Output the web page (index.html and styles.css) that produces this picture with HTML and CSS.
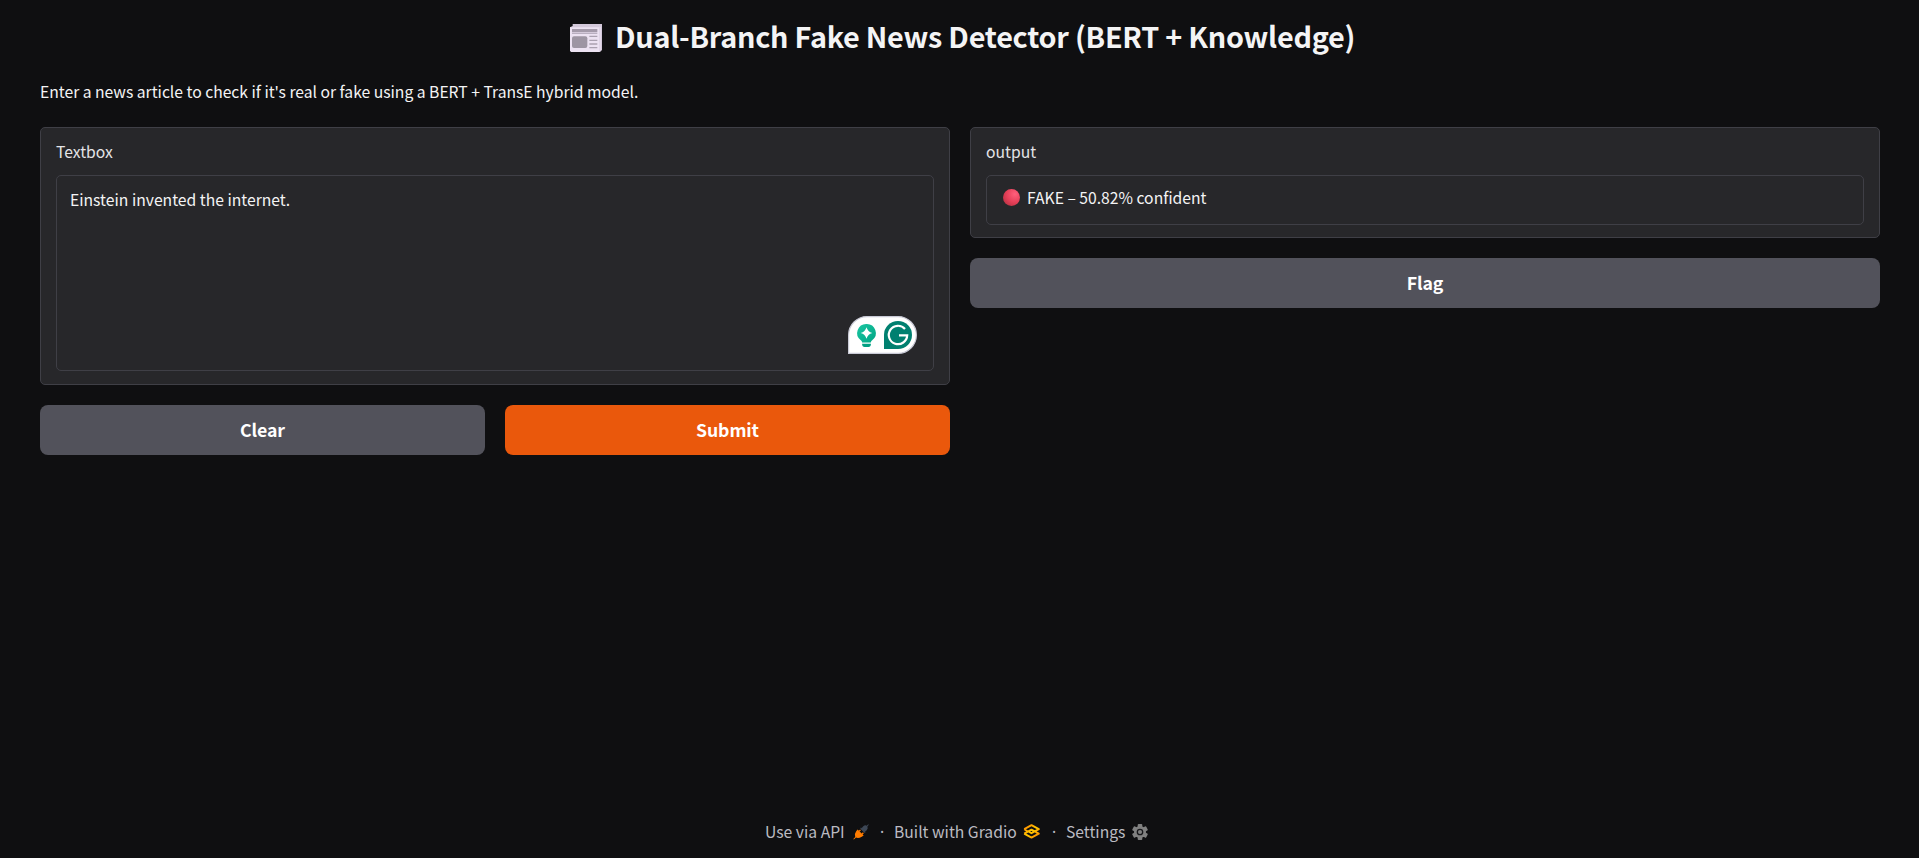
FILE: index.html
```html
<!DOCTYPE html>
<html lang="en">
<head>
<meta charset="utf-8">
<title>Dual-Branch Fake News Detector</title>
<link rel="stylesheet" href="styles.css">
</head>
<body>
<div class="app">
  <h1 class="title">
    <svg class="news" viewBox="0 0 96 84"><path d="M8 0H96V78L90 84H4L0 80V10L8 6Z" fill="#d3c8da"/><path d="M0 10H88V84H4L0 80Z" fill="#ece2f2"/><path d="M88 8H93V78L88 82Z" fill="#e3d8ea"/><path d="M6 15H82V25H6Z" fill="#a49aaa"/><path d="M6 27H82V30H6Z" fill="#b9afc0"/><rect x="6" y="37" width="46" height="35" rx="6" fill="#9d95a3"/><path d="M58 37H82M58 49H82M58 60H82M58 71H82" stroke="#aaa1b0" stroke-width="4"/></svg>
    <span class="title-text">Dual-Branch Fake News Detector (BERT + Knowledge)</span>
  </h1>
  <p class="desc">Enter a news article to check if it's real or fake using a BERT + TransE hybrid model.</p>
  <main class="columns">
    <section class="column">
      <div class="block">
        <div class="label label-in">Textbox</div>
        <div class="field area"><span class="value">Einstein invented the internet.</span>
          <svg class="assistant" width="69" height="38" viewBox="0 0 69 38">
            <defs><linearGradient id="bulb" x1="0" x2="1" y2="1"><stop stop-color="#1bc6a2"/><stop offset="1" stop-color="#00a584"/></linearGradient></defs>
            <path d="M.6 37.4V19A18.4 18.4 0 0 1 19 .6H50A18.4 18.4 0 0 1 50 37.4Z" fill="#fff" stroke="#c9cad6" stroke-width="1.2"/>
            <path d="M18.5 8A9 9 0 0 0 12.8 24.2C13.7 25 14 25.6 14.2 26.4H22.8C23 25.6 23.3 25 24.2 24.2A9 9 0 0 0 18.5 8Z" fill="url(#bulb)"/>
            <path d="M14 27.7H23Q22.7 31 20.5 31H16.5Q14.3 31 14 27.7Z" fill="#009f82"/>
            <path d="M18.5 11.2Q19.8 15.700 24.300 17Q19.800 18.300 18.500 22.800Q17.200 18.300 12.700 17Q17.200 15.700 18.500 11.200Z" fill="#fff"/>
            <path d="M36 33V19A14 14 0 1 1 50 33Z" fill="#008070"/>
            <path d="M57 13A9.200 9.200 0 1 0 59.200 19.300H51" fill="none" stroke="#fff" stroke-width="2.200"/>
          </svg>
        </div>
      </div>
      <div class="buttons"><button class="btn clear">Clear</button><button class="btn primary submit">Submit</button></div>
    </section>
    <section class="column">
      <div class="block block-out">
        <div class="label label-out">output</div>
        <div class="field result">
          <svg class="dot" viewBox="0 0 17 17"><defs><radialGradient id="red" cx=".7" cy=".3" r=".8"><stop stop-color="#ff5f7c"/><stop offset=".6" stop-color="#e64059"/><stop offset="1" stop-color="#bd3445"/></radialGradient></defs><circle cx="8.5" cy="8.5" r="8.5" fill="url(#red)"/></svg>
          <span class="verdict">FAKE – 50.82% confident</span>
        </div>
      </div>
      <button class="btn flag">Flag</button>
    </section>
  </main>
  <footer class="footer">
    <span class="api">Use via API</span>
    <svg class="plug" viewBox="0 0 16 16"><path d="M8 5.2 10 2.4Q12.200 .7 13.600 1.700L15.300 .2 15.800 .8 14.400 2.400Q15.400 4.300 13.500 6.500L11 8.200Z" fill="#3d4756"/><path d="M7.600 3.900 12.200 8.500" stroke="#3d4756" stroke-width="1.300"/><path d="M4.600 5.400 10.700 11.500 8.800 12.800Q5.200 14.800 3 13.600L.9 15.600 .3 15 2.200 12.900Q1 10.300 3.200 7.300Z" fill="#ff7c00"/><path d="M6 7.400 7.500 5.900M8.900 10.300 10.400 8.800" stroke="#ff7c00" stroke-width="1.300"/></svg>
    <span class="sep sep-a">·</span>
    <span class="built">Built with Gradio</span>
    <svg class="gradio" viewBox="0 0 17 15"><defs><linearGradient id="gold" x1="0" y1="0" x2="1" y2="1"><stop stop-color="#ff8400"/><stop offset=".5" stop-color="#ffc800"/><stop offset="1" stop-color="#ff8400"/></linearGradient></defs><path d="M1.200 5.200 8.500 1.200 15.800 5.200 8.500 9.200 5 7.200M1.200 9.600 8.500 5.600 12 7.600M1.200 9.600 8.500 13.600 15.800 9.600 12.500 7.800M1.200 5.200 4.500 7.200" fill="none" stroke="url(#gold)" stroke-width="1.900" stroke-linejoin="round"/></svg>
    <span class="sep sep-b">·</span>
    <span class="settings">Settings</span>
    <svg class="gear" viewBox="0 0 16 16"><g fill="#808080"><rect x="5.700" y="0" width="4.600" height="16" rx="1"/><rect x="5.700" y="0" width="4.600" height="16" rx="1" transform="rotate(60 8 8)"/><rect x="5.700" y="0" width="4.600" height="16" rx="1" transform="rotate(120 8 8)"/><circle cx="8" cy="8" r="6"/></g><circle cx="8" cy="8" r="2.700" fill="#808080" stroke="#18181b" stroke-width="1.300"/></svg>
  </footer>
</div>
</body>
</html>
```
FILE: styles.css
```css
* { box-sizing: border-box; }
body { margin: 0; background: #0f0f11; color: #f4f4f5; font-family: "Noto Sans CJK SC", "Noto Sans", sans-serif; font-size: 15.7px; line-height: 24px; white-space: nowrap; }
svg { display: block; flex: none; }
.app { height: 858px; padding: 0 39px 0 40px; display: flex; flex-direction: column; }
.title { height: 74px; margin: 0; padding: 0 0 0 530px; display: flex; align-items: center; font-size: 28.8px; line-height: 40px; font-weight: 700; }
.news { width: 32px; height: 28px; margin-top: 2px; }
.title-text { margin: -3px 0 0 13px; letter-spacing: -.25px; }
.desc { margin: 6px 0 23px; height: 24px; letter-spacing: -.01px; }
.columns { display: grid; grid-template-columns: 910px 910px; gap: 20px; align-items: start; }
.column { display: flex; flex-direction: column; gap: 20px; }
.block { background: #27272a; border: 1px solid #3f3f46; border-radius: 5px; padding: 12px 15px 13px; }
.block-out { padding-bottom: 12px; }
.label { height: 24px; margin-bottom: 11px; color: #e4e4e7; }
.field { border: 1px solid #3f3f46; border-radius: 5px; position: relative; }
.area { height: 196px; padding: 12px 13px; }
.value { display: block; }
.result { height: 50px; padding: 0 16px; display: flex; align-items: center; }
.dot { width: 17px; height: 17px; margin-top: -5px; }
.verdict { margin: -4px 0 0 7px; }
.assistant { position: absolute; right: 16px; bottom: 16px; }
.buttons { display: grid; grid-template-columns: 1fr 1fr; gap: 20px; }
.btn { height: 50px; padding: 0 0 2px; border: 0; border-radius: 8px; background: #52525b; color: #fff; font: 700 17.7px/28px "Noto Sans CJK SC", "Noto Sans", sans-serif; letter-spacing: -.1px; }
.primary { background: #ea580c; }
.footer { margin-top: auto; height: 52px; padding-left: 725px; display: flex; align-items: center; color: #bbbbc2; }
.api { width: 79px; }
.plug { width: 16px; height: 16px; margin-left: 9px; }
.sep { width: 6px; text-align: center; font-family: "Noto Sans", sans-serif; }
.sep-a { margin-left: 10px; }
.built { margin-left: 9px; width: 122px; }
.gradio { width: 17px; height: 15px; margin: -2px 0 0 7px; }
.sep-b { margin-left: 11px; }
.settings { margin-left: 9px; width: 59px; }
.gear { width: 16px; height: 16px; margin-left: 7px; }
```
